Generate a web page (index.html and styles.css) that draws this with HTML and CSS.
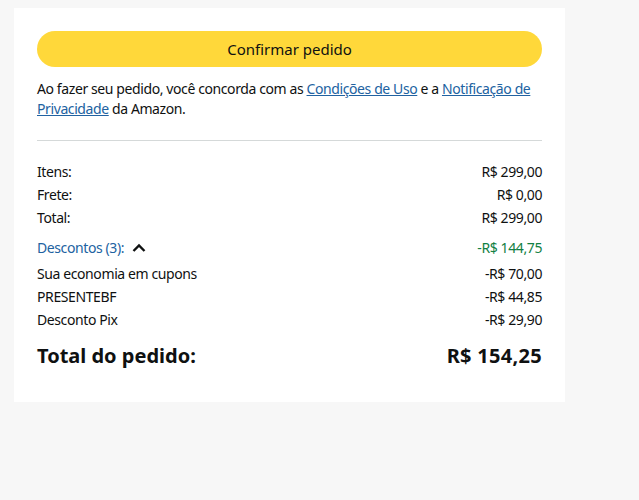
FILE: index.html
```html
<!DOCTYPE html>
<html lang="pt-BR">

<head>
  <meta charset="UTF-8">
  <meta name="viewport" content="width=device-width, initial-scale=1.0">
  <title>Resumo do pedido</title>
  <link rel="stylesheet" href="styles.css">
</head>

<body>
  <div class="summary">
    <button class="place-order">Confirmar pedido</button>
    <p class="legal">
      Ao fazer seu pedido, você concorda com as <a href="#">Condições de Uso</a> e a <a href="#">Notificação de
      Privacidade</a> da Amazon.
    </p>
    <hr class="divider">

    <div class="rows">
      <div class="row"><span>Itens:</span><span>R$ 299,00</span></div>
      <div class="row"><span>Frete:</span><span>R$ 0,00</span></div>
      <div class="row"><span>Total:</span><span>R$ 299,00</span></div>
    </div>

    <div class="row discounts">
      <span class="toggle">Descontos (3):
        <svg class="chevron" width="14" height="10" viewBox="0 0 14 10">
          <path d="M1.5 8 L7 2.5 L12.5 8" fill="none" stroke="#0f1111" stroke-width="2.4" />
        </svg>
      </span>
      <span class="saving">-R$ 144,75</span>
    </div>

    <div class="rows">
      <div class="row"><span>Sua economia em cupons</span><span>-R$ 70,00</span></div>
      <div class="row"><span>PRESENTEBF</span><span>-R$ 44,85</span></div>
      <div class="row"><span>Desconto Pix</span><span>-R$ 29,90</span></div>
    </div>

    <div class="row grand-total"><span>Total do pedido:</span><span class="grand-value">R$ 154,25</span></div>
  </div>
</body>

</html>
```

FILE: styles.css
```css
body {
  margin: 0;
  padding: 8px 0 0 14px;
  background: #f7f7f7;
  font-family: "Noto Sans", Arial, sans-serif;
  font-size: 14px;
  letter-spacing: -0.4px;
  color: #0f1111;
}

.summary {
  width: 505px;
  padding: 23px 23px 32px;
  background: #fff;
}

.place-order {
  display: block;
  width: 100%;
  height: 36px;
  border: none;
  border-radius: 18px;
  background: #ffd83a;
  font-family: inherit;
  font-size: 15px;
  letter-spacing: 0;
  color: #0f1111;
}

.legal {
  margin: 12px 0 0;
  line-height: 20px;
}

.legal a {
  color: #2162a1;
}

.divider {
  margin: 21px 0 19px;
  border: none;
  border-top: 1px solid #d5d9d9;
}

.row {
  display: flex;
  justify-content: space-between;
  align-items: center;
  line-height: 23px;
}

.discounts {
  margin-top: 7px;
  margin-bottom: 3px;
}

.toggle {
  display: flex;
  align-items: center;
  gap: 8px;
  color: #2162a1;
}

.saving {
  color: #118043;
}

.grand-total {
  margin-top: 11px;
  font-size: 20px;
  font-weight: bold;
  letter-spacing: 0;
  line-height: 28px;
}

.grand-value {
  letter-spacing: 0.3px;
}
```
